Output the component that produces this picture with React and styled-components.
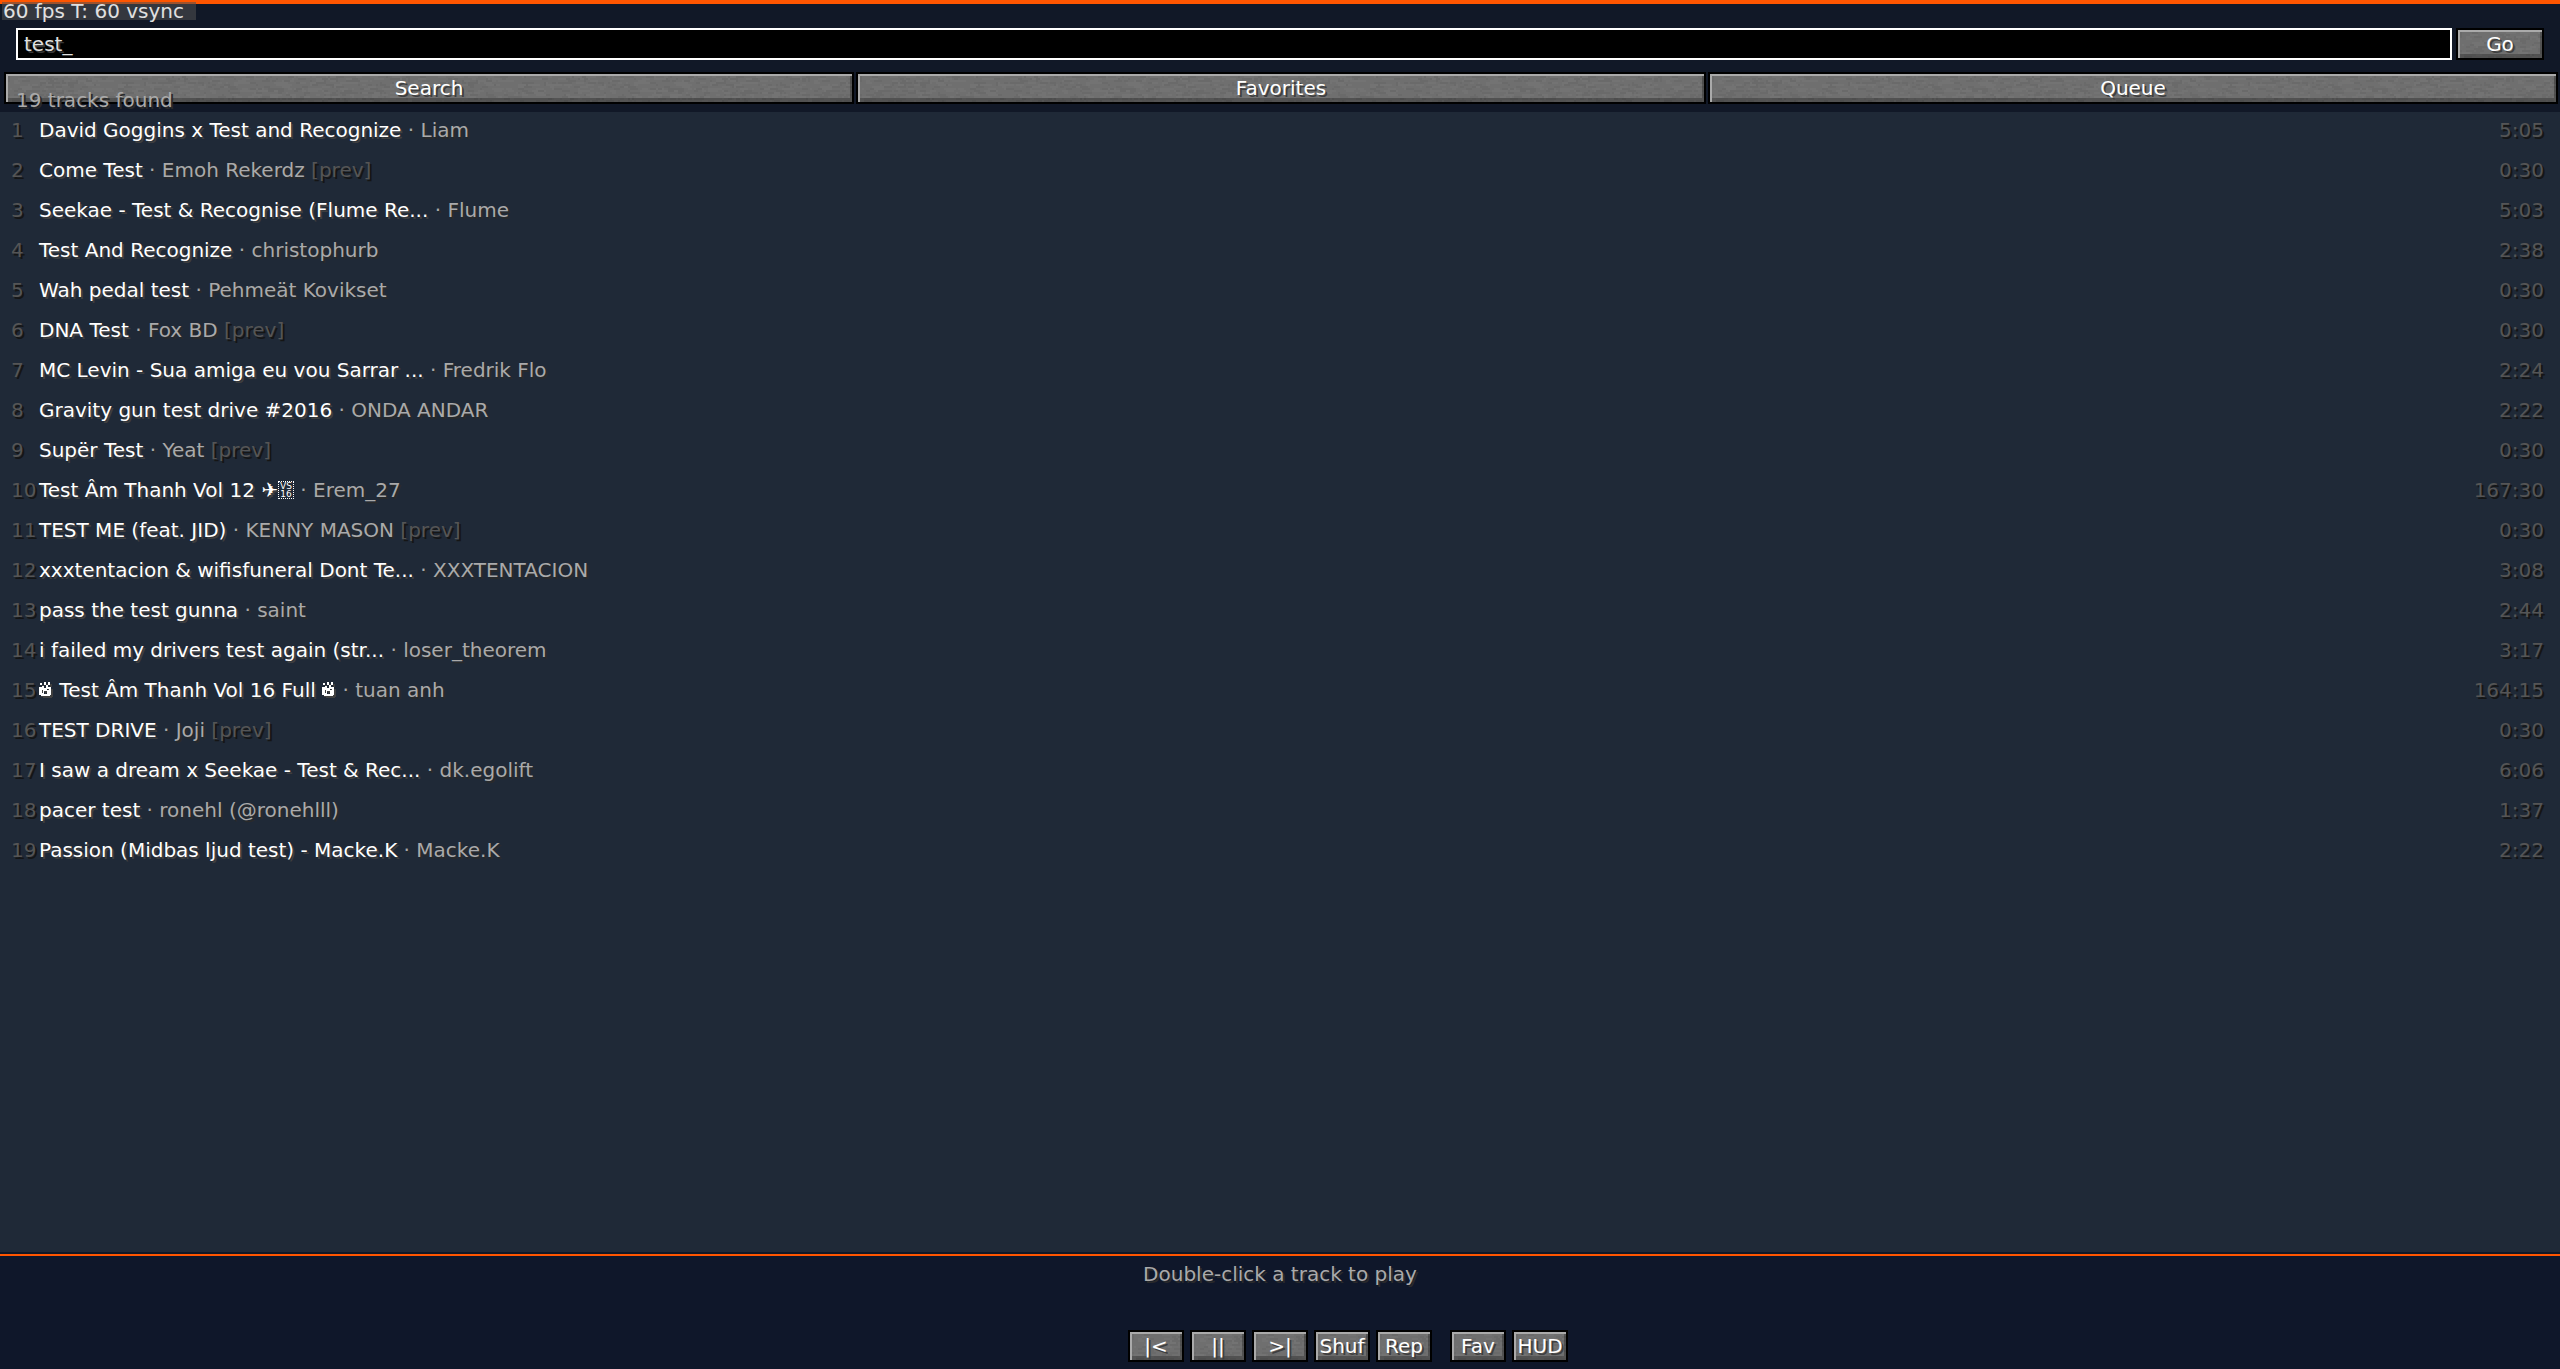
import React, { useState } from "react";
import styled, { createGlobalStyle } from "styled-components";

const GlobalStyle = createGlobalStyle`
    *, *::before, *::after {
        box-sizing: border-box;
    }

    html, body, #root {
        height: 100%;
    }

    body {
        margin: 0;
        background: #0f172a;
    }

    body, button, input {
        font-family: "DejaVu Sans", sans-serif;
        font-size: 20px;
        line-height: 20px;
    }
`;

const TRACKS = [
    { title: "David Goggins x Test and Recognize", artist: "Liam", time: "5:05" },
    { title: "Come Test", artist: "Emoh Rekerdz", time: "0:30", preview: true },
    { title: "Seekae - Test & Recognise (Flume Re...", artist: "Flume", time: "5:03" },
    { title: "Test And Recognize", artist: "christophurb", time: "2:38" },
    { title: "Wah pedal test", artist: "Pehmeät Kovikset", time: "0:30" },
    { title: "DNA Test", artist: "Fox BD", time: "0:30", preview: true },
    { title: "MC Levin - Sua amiga eu vou Sarrar ...", artist: "Fredrik Flo", time: "2:24" },
    { title: "Gravity gun test drive #2016", artist: "ONDA ANDAR", time: "2:22" },
    { title: "Supër Test", artist: "Yeat", time: "0:30", preview: true },
    { title: "Test Âm Thanh Vol 12 ✈", artist: "Erem_27", time: "167:30", selector: true },
    { title: "TEST ME (feat. JID)", artist: "KENNY MASON", time: "0:30", preview: true },
    { title: "xxxtentacion & wifisfuneral Dont Te...", artist: "XXXTENTACION", time: "3:08" },
    { title: "pass the test gunna", artist: "saint", time: "2:44" },
    { title: "i failed my drivers test again (str...", artist: "loser_theorem", time: "3:17" },
    { title: " Test Âm Thanh Vol 16 Full ", artist: "tuan anh", time: "164:15", fire: true },
    { title: "TEST DRIVE", artist: "Joji", time: "0:30", preview: true },
    { title: "I saw a dream x Seekae - Test & Rec...", artist: "dk.egolift", time: "6:06" },
    { title: "pacer test", artist: "ronehl (@ronehlll)", time: "1:37" },
    { title: "Passion (Midbas ljud test) - Macke.K", artist: "Macke.K", time: "2:22" },
];

// stone grain for the buttons, drawn as 2px high streaks
const grain = () => {
    let seed = 7;
    const next = () => {
        seed = (seed * 16807) % 2147483647;
        return seed / 2147483647;
    };
    let rects = "";
    for (let i = 0; i < 700; i++) {
        const x = Math.floor(next() * 200) * 2;
        const y = Math.floor(next() * 14) * 2;
        const w = (1 + Math.floor(next() * 4)) * 2;
        const fill = next() > 0.5 ? "#737373" : "#6a6a6a";
        rects += `<rect x='${x}' y='${y}' width='${w}' height='2' fill='${fill}'/>`;
    }
    return encodeURIComponent(
        `<svg xmlns='http://www.w3.org/2000/svg' width='400' height='28'>${rects}</svg>`
    );
};

const GRAIN = `url("data:image/svg+xml,${grain()}")`;

const Screen = styled.div`
    min-height: 100%;
    display: flex;
    flex-direction: column;
    background: #111827;
    color: #fff;
`;

const Header = styled.header`
    position: relative;
    border-top: 4px solid #ff5500;
    padding-bottom: 8px;
`;

const FpsBadge = styled.div`
    position: absolute;
    top: -2px;
    left: 2px;
    min-width: 194px;
    padding: 0 1px;
    height: 18px;
    line-height: 18px;
    background: rgba(80, 80, 80, 0.56);
    color: #e0e0e0;
    white-space: nowrap;
`;

const SearchForm = styled.form`
    display: flex;
    gap: 4px;
    padding: 24px 16px 12px;
`;

const SearchInput = styled.input`
    flex: 1;
    min-width: 0;
    height: 32px;
    padding: 0 6px;
    border: 2px solid #fff;
    border-radius: 0;
    outline: none;
    background: #000;
    color: #e0e0e0;
    text-shadow: 2px 2px 0 #383838;
`;

const StoneButton = styled.button`
    height: 32px;
    padding: 0;
    border: 2px solid #000;
    border-radius: 0;
    background: #6f6f6f ${GRAIN};
    box-shadow: inset 2px 2px 0 #aaa, inset -2px -4px 0 rgba(0, 0, 0, 0.27);
    color: #fff;
    text-shadow: 2px 2px 0 #3f3f3f;
    white-space: nowrap;
`;

const GoButton = styled(StoneButton)`
    width: 88px;
`;

const Tabs = styled.nav`
    display: flex;
    gap: 2px;
    padding: 0 2px 0 4px;
`;

const TabButton = styled(StoneButton)`
    flex: 1;
`;

const ResultCount = styled.div`
    position: absolute;
    left: 16px;
    bottom: 2px;
    color: #aaa;
    text-shadow: 2px 2px 0 #2a2a2a;
`;

const TrackList = styled.ol`
    flex: 1;
    margin: 0;
    padding: 0 16px 0 11px;
    list-style: none;
    background: #1f2937;
`;

const TrackRow = styled.li`
    display: flex;
    align-items: center;
    height: 40px;
    padding-bottom: 4px;
    white-space: pre;
`;

const Dim = styled.span`
    color: #555;
    text-shadow: 2px 2px 0 #151515;
`;

const Index = styled(Dim)`
    width: 28px;
`;

const Title = styled.span`
    display: flex;
    align-items: center;
    text-shadow: 2px 2px 0 #3f3f3f;
`;

const Artist = styled.span`
    color: #aaa;
    text-shadow: 2px 2px 0 #2a2a2a;
`;

const Duration = styled(Dim)`
    margin-left: auto;
`;

const SelectorBox = styled.span`
    width: 16px;
    height: 18px;
    border: 1px dotted #fff;
    font-size: 9px;
    line-height: 8px;
    text-align: center;
    text-shadow: none;
`;

const FireSvg = styled.svg`
    width: 14px;
    height: 16px;
`;

const Footer = styled.footer`
    display: flex;
    flex-direction: column;
    align-items: center;
    gap: 46px;
    margin-top: 2px;
    padding: 8px 0 7px;
    border-top: 2px solid #ff5500;
    background: #0f172a;
`;

const Hint = styled.p`
    margin: 0;
    color: #aaa;
    text-shadow: 2px 2px 0 #2a2a2a;
`;

const Controls = styled.div`
    display: flex;
    gap: 6px;
    padding-left: 136px;
`;

const ControlButton = styled(StoneButton)`
    width: 56px;
    margin-left: ${({ $apart }) => ($apart ? "12px" : "0")};
`;

const FIRE = "M1 1h2v2H1zM5 0h2v3H5zM9 0h2v3H9zM0 5h3V4h2v2h2V3h2v2h3v8h-1v1H2v-1H0zM3 8v3h1V8zM5 9v3h3V9zM8 7v1h2V7z";

const Fire = () => (
    <FireSvg viewBox="0 0 14 16" shapeRendering="crispEdges" fillRule="evenodd" aria-hidden="true">
        <path d={FIRE} transform="translate(2 2)" fill="#3f3f3f" />
        <path d={FIRE} fill="#fff" />
    </FireSvg>
);

const Track = ({ track, index }) => (
    <TrackRow>
        <Index>{index}</Index>
        <Title>
            {track.fire && <Fire />}
            {track.title}
            {track.fire && <Fire />}
            {track.selector && <SelectorBox>VS<br />16</SelectorBox>}
        </Title>
        <Artist> · {track.artist}</Artist>
        {track.preview && <Dim> [prev]</Dim>}
        <Duration>{track.time}</Duration>
    </TrackRow>
);

const App = () => {
    const [query, setQuery] = useState("test_");

    return (
        <>
            <GlobalStyle />
            <Screen>
                <Header>
                    <FpsBadge>60 fps T: 60 vsync</FpsBadge>
                    <SearchForm onSubmit={(e) => e.preventDefault()}>
                        <SearchInput
                            aria-label="Search tracks"
                            value={query}
                            onChange={(e) => setQuery(e.target.value)}
                        />
                        <GoButton type="submit">Go</GoButton>
                    </SearchForm>
                    <Tabs>
                        <TabButton type="button">Search</TabButton>
                        <TabButton type="button">Favorites</TabButton>
                        <TabButton type="button">Queue</TabButton>
                    </Tabs>
                    <ResultCount>19 tracks found</ResultCount>
                </Header>
                <TrackList>
                    {TRACKS.map((track, i) => (
                        <Track key={i} track={track} index={i + 1} />
                    ))}
                </TrackList>
                <Footer>
                    <Hint>Double-click a track to play</Hint>
                    <Controls>
                        <ControlButton type="button">|&lt;</ControlButton>
                        <ControlButton type="button">||</ControlButton>
                        <ControlButton type="button">&gt;|</ControlButton>
                        <ControlButton type="button">Shuf</ControlButton>
                        <ControlButton type="button">Rep</ControlButton>
                        <ControlButton type="button" $apart>Fav</ControlButton>
                        <ControlButton type="button">HUD</ControlButton>
                    </Controls>
                </Footer>
            </Screen>
        </>
    );
};

export default App;
